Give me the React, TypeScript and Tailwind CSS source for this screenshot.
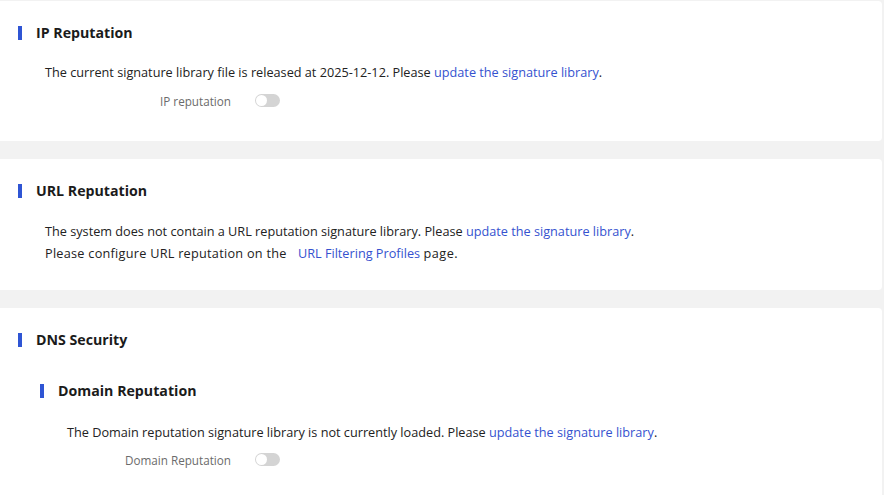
import React from "react";

const font = { fontFamily: '"Open Sans", "Noto Sans", "Liberation Sans", sans-serif' };

function Toggle() {
  return (
    <div className="w-[25px] h-[13px] rounded-full bg-[#d4d4d4] flex items-center pl-px">
      <div className="w-[11px] h-[11px] rounded-full bg-white" />
    </div>
  );
}

function Title({ children, sub }: { children: React.ReactNode; sub?: boolean }) {
  return (
    <div className={`flex items-center h-[20px] ${sub ? "pl-[40px]" : "pl-[18px]"}`}>
      <div className="w-[4px] h-[14px] bg-[#2f55d4]" />
      <div className="ml-[14px] text-[14.2px] font-bold text-[#1b1b1b]">{children}</div>
    </div>
  );
}

function Link({ children, className }: { children: React.ReactNode; className?: string }) {
  return <span className={`text-[#3552cf] ${className ?? ""}`}>{children}</span>;
}

function Switch({ label, width }: { label: string; width: string }) {
  return (
    <div className="flex items-center h-[20px]">
      <div className={`${width} text-right text-[11.7px] text-[#6b6b6b] pt-[3px]`}>{label}</div>
      <div className="ml-[24px]">
        <Toggle />
      </div>
    </div>
  );
}

export default function App() {
  return (
    <div className="min-h-[495px] w-[884px] bg-[#f2f2f2] pt-px pr-[2px]" style={font}>
      <div className="bg-white rounded-r-[4px] h-[140px] pt-[22px]">
        <Title>IP Reputation</Title>
        <div className="pl-[45px] mt-[19px] text-[12.7px] leading-[20px] text-[#222]">
          The current signature library file is released at 2025-12-12. Please <Link>update the signature library</Link>.
        </div>
        <div className="pl-[45px] mt-[8px]">
          <Switch label="IP reputation" width="w-[186px]" />
        </div>
      </div>
      <div className="bg-white rounded-r-[4px] h-[131px] pt-[22px] mt-[18px]">
        <Title>URL Reputation</Title>
        <div className="pl-[45px] mt-[19px] text-[12.7px] leading-[22px] text-[#222]">
          <div>
            The system does not contain a URL reputation signature library. Please <Link>update the signature library</Link>.
          </div>
          <div>
            <span className="tracking-[0.26px]">Please configure URL reputation on the</span>{" "}
            <Link className="ml-[8px]">URL Filtering Profiles</Link>{" "}
            <span className="tracking-[0.5px]">page.</span>
          </div>
        </div>
      </div>
      <div className="bg-white rounded-tr-[4px] h-[187px] pt-[22px] mt-[18px]">
        <Title>DNS Security</Title>
        <div className="mt-[31px]">
          <Title sub>Domain Reputation</Title>
        </div>
        <div className="pl-[67px] mt-[21px] text-[12.7px] leading-[20px] text-[#222]">
          The Domain reputation signature library is not currently loaded. Please <Link>update the signature library</Link>.
        </div>
        <div className="pl-[67px] mt-[7px]">
          <Switch label="Domain Reputation" width="w-[164px]" />
        </div>
      </div>
    </div>
  );
}
